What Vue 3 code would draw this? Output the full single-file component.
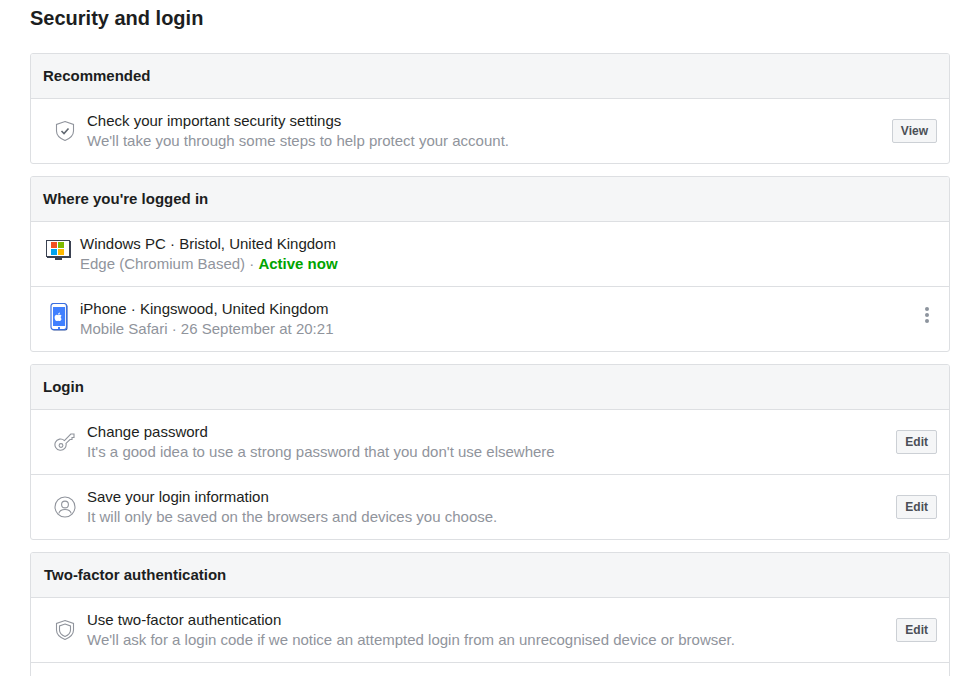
<script setup>
const recommended = { title: 'Check your important security settings', sub: "We'll take you through some steps to help protect your account." }

const devices = [
  { id: 'pc', name: 'Windows PC', place: 'Bristol, United Kingdom', sub: 'Edge (Chromium Based)', active: true },
  { id: 'phone', name: 'iPhone', place: 'Kingswood, United Kingdom', sub: 'Mobile Safari · 26 September at 20:21', menu: true }
]

const login = [
  { id: 'key', title: 'Change password', sub: "It's a good idea to use a strong password that you don't use elsewhere" },
  { id: 'user', title: 'Save your login information', sub: 'It will only be saved on the browsers and devices you choose.' }
]
</script>

<template>
  <div class="page">
    <h1 class="title">Security and login</h1>

    <section class="card">
      <h2 class="head">Recommended</h2>
      <div class="row">
        <svg class="ico" width="22" height="22" viewBox="0 0 22 22" fill="none" stroke="#90949c" stroke-width="1.1">
          <path d="M11 1.5 L19.5 4.5 V11 C19.5 15.5 16 18.5 11 20.5 C6 18.5 2.5 15.5 2.5 11 V4.5 Z" />
          <path d="M7.5 11 L10 13.5 L14.5 8.5" stroke="#606770" stroke-width="1.6" />
        </svg>
        <div class="text">
          <div class="main">{{ recommended.title }}</div>
          <div class="sub">{{ recommended.sub }}</div>
        </div>
        <button class="btn">View</button>
      </div>
    </section>

    <section class="card">
      <h2 class="head">Where you're logged in</h2>
      <div v-for="d in devices" :key="d.id" class="row device">
        <svg v-if="d.id === 'pc'" class="dev-ico" width="26" height="32" viewBox="0 0 26 32">
          <rect x="2" y="3" width="24" height="17" fill="#3b4252" />
          <rect x="1.5" y="2.5" width="23" height="16" fill="#fff" stroke="#3b4252" />
          <rect x="10" y="20" width="7" height="2" fill="#3b4252" />
          <rect x="6" y="4" width="6" height="6" fill="#f25022" />
          <rect x="13" y="4" width="6" height="6" fill="#7fba00" />
          <rect x="6" y="11" width="6" height="6" fill="#00a4ef" />
          <rect x="13" y="11" width="6" height="6" fill="#ffb900" />
        </svg>
        <svg v-else class="dev-ico" width="26" height="32" viewBox="0 0 26 32">
          <rect x="6.5" y="1" width="16" height="26.5" rx="2.5" fill="#2d4f9e" />
          <rect x="6" y="0.5" width="15.5" height="26" rx="2.5" fill="#fff" stroke="#3a6fe0" stroke-width="1.2" />
          <rect x="8" y="4" width="12" height="19" fill="#4080ff" />
          <path d="M16.6 15.9 C16.1 17 15.4 18 14.6 18 C14 18 13.8 17.7 13.1 17.7 C12.4 17.7 12.2 18 11.6 18 C10.7 18 9.6 16.2 9.6 14.4 C9.6 12.8 10.6 11.8 11.7 11.8 C12.4 11.8 12.8 12.2 13.2 12.2 C13.6 12.2 14 11.8 14.9 11.8 C15.5 11.8 16.2 12.1 16.6 12.8 C15.3 13.5 15.5 15.4 16.6 15.9 Z" fill="#fff" />
          <path d="M13 11.6 C13 10.4 13.9 9.5 15 9.4 C15.1 10.6 14.1 11.6 13 11.6 Z" fill="#fff" />
          <rect x="13" y="24" width="2" height="2" fill="#4080ff" />
        </svg>
        <div class="text">
          <div class="main">{{ d.name }} · {{ d.place }}</div>
          <div class="sub">
            {{ d.sub }}<template v-if="d.active"> · <b class="active">Active now</b></template>
          </div>
        </div>
        <div v-if="d.menu" class="dots"><i></i><i></i><i></i></div>
      </div>
    </section>

    <section class="card">
      <h2 class="head">Login</h2>
      <div v-for="item in login" :key="item.id" class="row">
        <svg v-if="item.id === 'key'" class="ico" width="22" height="22" viewBox="0 0 22 22" fill="none" stroke="#90949c" stroke-width="1.1">
          <path d="M10.4 9.6 L16.8 3 H20 V6.5 H18 V8.5 H16 L12 12.4 A5.6 5.6 0 1 1 10.4 9.6 Z" />
          <circle cx="7" cy="14.5" r="1.9" />
        </svg>
        <svg v-else class="ico" width="22" height="22" viewBox="0 0 22 22" fill="none" stroke="#90949c" stroke-width="1.1">
          <circle cx="11" cy="11" r="10" />
          <circle cx="11" cy="8.5" r="3.4" />
          <path d="M4.8 17.5 C5.5 14.5 8 13.5 11 13.5 C14 13.5 16.5 14.5 17.2 17.5" />
        </svg>
        <div class="text">
          <div class="main">{{ item.title }}</div>
          <div class="sub">{{ item.sub }}</div>
        </div>
        <button class="btn">Edit</button>
      </div>
    </section>

    <section class="card">
      <h2 class="head two-factor">Two-factor authentication</h2>
      <div class="row">
        <svg class="ico" width="22" height="22" viewBox="0 0 22 22" fill="none" stroke="#90949c" stroke-width="1.1">
          <path d="M11 1.5 L19.5 4.5 V11 C19.5 15.5 16 18.5 11 20.5 C6 18.5 2.5 15.5 2.5 11 V4.5 Z" />
          <path d="M11 5 L16.5 7 V11 C16.5 14 14.5 16 11 17.5 C7.5 16 5.5 14 5.5 11 V7 Z" />
        </svg>
        <div class="text">
          <div class="main">Use two-factor authentication</div>
          <div class="sub">We'll ask for a login code if we notice an attempted login from an unrecognised device or browser.</div>
        </div>
        <button class="btn">Edit</button>
      </div>
      <div class="row"></div>
    </section>
  </div>
</template>

<style>
html, body {
  margin: 0;
  height: 676px;
  overflow: hidden;
  background: #fff;
}
</style>

<style scoped>
.page {
  width: 920px;
  padding: 0 7px 0 30px;
  font-family: "Liberation Sans", Arial, sans-serif;
  color: #1c1e21;
}

.title {
  margin: 0;
  height: 53px;
  padding-top: 6px;
  box-sizing: border-box;
  font-size: 20px;
  line-height: 24px;
  font-weight: 700;
}

.card {
  border: 1px solid #dddfe2;
  border-radius: 3px;
  margin-bottom: 12px;
  overflow: hidden;
}

.head {
  margin: 0;
  height: 44px;
  padding: 0 12px;
  background: #f5f6f7;
  font-size: 15px;
  line-height: 44px;
  font-weight: 700;
}

.two-factor {
  padding-left: 13px;
}

.row {
  display: flex;
  align-items: center;
  height: 64px;
  padding: 0 12px 0 23px;
  border-top: 1px solid #dddfe2;
}

.ico {
  flex: none;
  margin-right: 11px;
}

.device {
  padding-left: 14px;
}

.dev-ico {
  flex: none;
  margin-right: 9px;
}

.text {
  flex: 1;
  min-width: 0;
}

.main {
  font-size: 15px;
  line-height: 20px;
}

.sub {
  font-size: 15px;
  line-height: 20px;
  color: #90949c;
}

.active {
  color: #00a400;
}

.btn {
  flex: none;
  height: 24px;
  padding: 0 8px;
  border: 1px solid #ccd0d5;
  border-radius: 2px;
  background: #f5f6f7;
  color: #4b4f56;
  font-family: inherit;
  font-size: 12px;
  font-weight: 700;
}

.dots {
  display: flex;
  flex-direction: column;
  gap: 2px;
  margin: 0 8px 8px 0;
}

.dots i {
  display: block;
  width: 4px;
  height: 4px;
  border-radius: 50%;
  background: #8d949e;
}
</style>
